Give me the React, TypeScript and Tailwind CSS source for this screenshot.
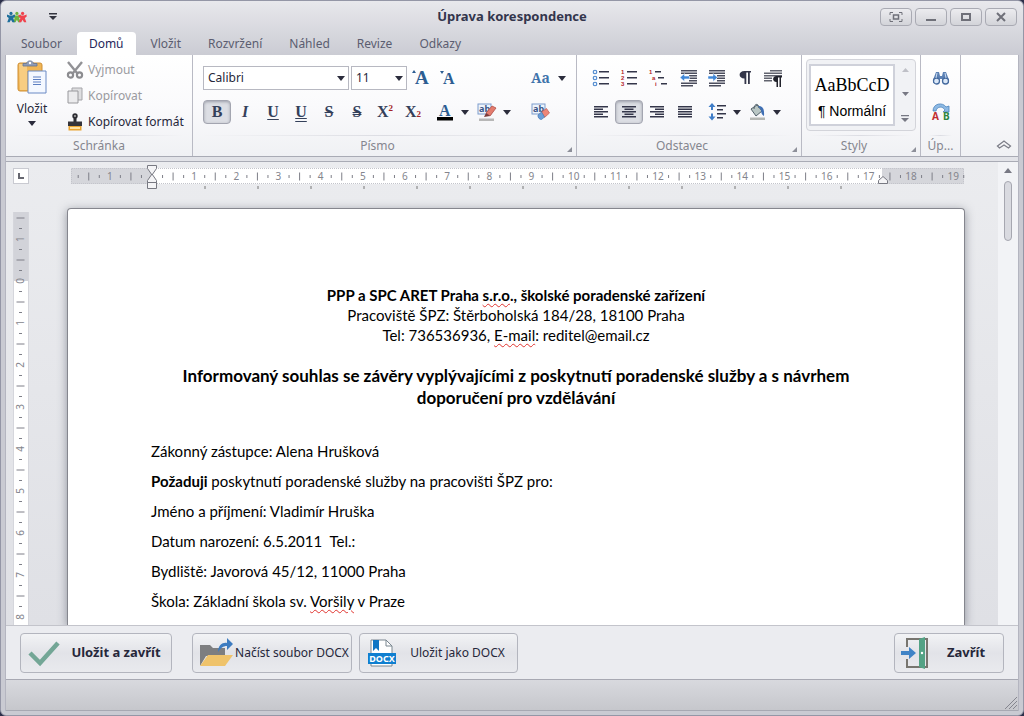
import type { ReactNode } from 'react';
import { clsx } from 'clsx';

const TABS = ['Soubor', 'Domů', 'Vložit', 'Rozvržení', 'Náhled', 'Revize', 'Odkazy'];
const CM = 42;

function Caret() {
  return (
    <svg width="8" height="5" viewBox="0 0 8 5" aria-hidden>
      <path d="M0 0h8L4 5z" fill="#2b2c3c" />
    </svg>
  );
}

function ToolButton({ label, active, children }: { label: string; active?: boolean; children: ReactNode }) {
  return (
    <button
      type="button"
      aria-label={label}
      aria-pressed={active}
      className={clsx(
        'flex h-6 w-7 shrink-0 items-center justify-center leading-5',
        active &&
          'rounded-sm border border-[#a3a5b0] bg-[#dcdee4] shadow-[inset_0_1px_3px_rgba(80,85,100,0.45)]',
      )}
    >
      {children}
    </button>
  );
}

function CaretButton({ label }: { label: string }) {
  return (
    <button type="button" aria-label={label} className="flex h-6 w-3 shrink-0 items-center justify-center">
      <Caret />
    </button>
  );
}

function Group({ title, className, launcher, children }: {
  title: string;
  className: string;
  launcher?: boolean;
  children: ReactNode;
}) {
  return (
    <section className={clsx('relative flex shrink-0 flex-col border-r border-[#b9bac4]', className)}>
      <div className="h-20">{children}</div>
      <div className="mx-2 h-px bg-linear-to-r from-transparent via-[#dcdde3] to-transparent" />
      <h2 className={clsx('text-center text-xs leading-5 text-[#85868f]', launcher && 'pr-3.5')}>{title}</h2>
      {launcher && (
        <svg className="absolute right-1 bottom-1" width="5" height="5" viewBox="0 0 5 5" aria-hidden>
          <path d="M5 0v5H0z" fill="#8d8f99" />
        </svg>
      )}
    </section>
  );
}

function Combo({ label, value, className }: { label: string; value: string; className: string }) {
  return (
    <div className={clsx('relative', className)}>
      <select
        aria-label={label}
        className="block h-6 w-full appearance-none border border-[#b7b8c1] bg-white pl-1 text-xs text-[#26273a]"
      >
        <option>{value}</option>
      </select>
      <span className="pointer-events-none absolute inset-y-0 right-1 flex items-center">
        <Caret />
      </span>
    </div>
  );
}

// Horizontal bars of a paragraph icon, each given as [x, y, width].
function Lines({ rows, fill = '#34364a' }: { rows: number[][]; fill?: string }) {
  return (
    <>
      {rows.map(([x, y, w], i) => (
        <rect key={i} x={x} y={y} width={w} height="1.5" fill={fill} />
      ))}
    </>
  );
}

function Icon({ children }: { children: ReactNode }) {
  return (
    <svg className="overflow-visible" width="18" height="18" viewBox="0 0 18 18" aria-hidden>
      {children}
    </svg>
  );
}

function AlignIcon({ kind }: { kind: 'left' | 'center' | 'right' | 'justify' }) {
  const rows = [0, 1, 2, 3, 4].map((i) => {
    const w = kind === 'justify' || i % 2 === 0 ? 14 : 9;
    const x = kind === 'center' ? 9 - w / 2 : kind === 'right' ? 16 - w : 2;
    return [x, 3 + i * 2.5, w];
  });
  return (
    <Icon>
      <Lines rows={rows} />
    </Icon>
  );
}

function IndentIcon({ out }: { out?: boolean }) {
  return (
    <Icon>
      <Lines rows={[[1, 1, 16], [1, 3.5, 16], [9, 6, 8], [9, 8.5, 8], [9, 11, 8], [1, 13.5, 16], [1, 16, 12]]} fill="#4b4d5d" />
      <path
        d={out ? 'M0 8.5l4.5-4v2.6h5v2.8h-5v2.6z' : 'M9.500 8.500l-4.500-4v2.600H0v2.800h5v2.600z'}
        fill="#3f86d6"
        stroke="#fff"
        strokeWidth=".5"
      />
    </Icon>
  );
}

function ListIcon({ kind }: { kind: 'bullets' | 'numbers' | 'levels' }) {
  if (kind === 'bullets') {
    return (
      <Icon>
        {[3, 9, 15].map((y) => (
          <circle key={y} cx="3" cy={y} r="1.8" fill="#eaf3fd" stroke="#4a86cc" strokeWidth="1.1" />
        ))}
        <Lines rows={[[7, 2, 10], [7, 8, 10], [7, 14, 10]]} />
      </Icon>
    );
  }
  const steps = kind === 'numbers' ? [0, 0, 0] : [0, 3, 6];
  const marks = kind === 'numbers' ? ['1', '2', '3'] : ['1', 'a', 'i'];
  return (
    <Icon>
      {marks.map((m, i) => (
        <text
          key={m}
          x={1 + steps[i]}
          y={5 + i * 6}
          fontSize="6"
          fill="#b2262c"
          className="font-['Liberation_Sans',sans-serif] font-bold"
        >
          {m}
        </text>
      ))}
      <Lines rows={steps.map((s, i) => [7 + s, 2 + i * 6, kind === 'numbers' ? 10 : 6])} />
    </Icon>
  );
}

function AppLogo() {
  return (
    <svg width="20" height="12" viewBox="0 0 20 12" aria-hidden>
      {[
        [9.9, '#6fb43f'],
        [4, '#1f6f9c'],
        [15.6, '#f0434d'],
      ].map(([x, c]) => (
        <g key={x} transform={`translate(${x} 0)`} fill={c as string}>
          <circle cy="2.4" r="1.6" />
          <path d="M-4 3.600l2.600 1h2.800L4 3.600v2.200L2.200 7l1.600 4.200H1.400L0 8.800l-1.400 2.400h-2.400L-2.200 7-4 5.800z" />
        </g>
      ))}
    </svg>
  );
}

function ClipboardIcon() {
  return (
    <svg width="32" height="36" viewBox="0 0 32 36" aria-hidden>
      <rect x="2" y="4" width="24" height="28" rx="2" fill="#f0b555" stroke="#cf8f35" />
      <path d="M3 5h8v26H4z" fill="#f8cd82" />
      <path d="M7 7V4.500h3.500C11 1 17 1 17.500 4.500H21V7z" fill="#8f9cb8" stroke="#66738f" strokeWidth=".8" />
      <circle cx="14" cy="4" r="1.200" fill="#fff" />
      <path d="M12 12h18v22H12z" fill="#f4f8ff" stroke="#6b8ac4" />
      <path d="M17 18h8M17 20.500h8M17 23h8M17 25.500h8" stroke="#5c7fc2" />
    </svg>
  );
}

function ScissorsIcon() {
  return (
    <Icon>
      <path d="M2 1l9 11M16 1L7 12" stroke="#929296" strokeWidth="2.400" fill="none" />
      <circle cx="4.500" cy="14" r="2.600" fill="none" stroke="#8c8c90" strokeWidth="2.200" />
      <circle cx="13.500" cy="14" r="2.600" fill="none" stroke="#8c8c90" strokeWidth="2.200" />
    </Icon>
  );
}

function CopyIcon() {
  return (
    <Icon>
      <path d="M6 1h10v12H6z" fill="#dedee0" stroke="#a5a5a9" />
      <path d="M2 4h10v12H2z" fill="#ebebed" stroke="#98989c" />
    </Icon>
  );
}

function BrushIcon() {
  return (
    <Icon>
      <circle cx="9" cy="3" r="2.700" fill="#2d2d33" />
      <circle cx="9" cy="3" r=".9" fill="#bbb" />
      <path d="M7.500 5h3v4h-3z" fill="#2d2d33" />
      <path d="M2 8.500h14V13H2z" fill="#34343a" />
      <path d="M2.500 13h13v4.500h-13z" fill="#eaa431" />
      <path d="M4 14h10v2H4z" fill="#ffe3a4" />
    </Icon>
  );
}

function MarkerIcon({ eraser }: { eraser?: boolean }) {
  return (
    <svg width="20" height="20" viewBox="0 0 20 20" aria-hidden>
      <rect x="1" y="2" width="13" height="10" fill="#eef4fc" stroke="#7d9ccc" />
      <text x="2" y="10" fontSize="9" fontWeight="700" fill="#3a5688">
        ab
      </text>
      {eraser ? (
        <>
          <path d="M10.500 10l5-3.500 3 4.500-5 4.500z" fill="#ee8577" stroke="#bb5a52" strokeWidth=".7" />
          <path d="M7 13l3.500-3 3 5-3 2.500c-2 0-4-2-3.500-4.500z" fill="#6b9fd8" stroke="#4a79b4" strokeWidth=".7" />
        </>
      ) : (
        <>
          <path d="M9 11l6-7 4 2-6 8z" fill="#e47c6e" stroke="#b04f46" strokeWidth=".8" />
          <path d="M7 15l2-4 4 3z" fill="#7b3a38" />
          <rect x="2" y="16.500" width="15" height="2.500" fill="#b7b7b7" />
        </>
      )}
    </svg>
  );
}

function BucketIcon() {
  return (
    <Icon>
      <path d="M3 6l6-4 5 6-6 5z" fill="#b9c6c4" stroke="#51606a" />
      <path d="M6 6c0-6 5-6 5-1" fill="none" stroke="#51606a" />
      <path d="M10 3c5 0 6.500 3 6 10-2-1-3-3-3-6z" fill="#3f6fb4" />
      <rect x="2" y="14.500" width="15" height="2.500" fill="#b5b7b4" />
    </Icon>
  );
}

function SpacingIcon() {
  return (
    <Icon>
      <path d="M4 0l3.500 4H5v3H3V4H.5zM4 17.500l3.500-4H5v-3H3v3H.5z" fill="#3f7dc8" />
      <Lines rows={[[9, 2, 9], [9, 6, 6], [9, 10, 9], [9, 14, 6]]} />
    </Icon>
  );
}

function Binoculars() {
  return (
    <Icon>
      <path d="M4 3h3l1 4h2l1-4h3l3 8v3h-6v-4H7v4H1v-3z" fill="#5c81b4" />
      <circle cx="4.500" cy="12" r="3" fill="#dbe8f8" stroke="#456a9f" strokeWidth="1.300" />
      <circle cx="13.500" cy="12" r="3" fill="#dbe8f8" stroke="#456a9f" strokeWidth="1.300" />
      <path d="M5 4l-1 5M13 4l1 5" stroke="#c9dbf1" />
    </Icon>
  );
}

function ReplaceIcon() {
  return (
    <svg className="overflow-visible" width="20" height="20" viewBox="0 0 20 20" aria-hidden>
      <path d="M2 9c0-8 10-9 13-4l3-1v6h-6l2-2C12 4 6 4 5 9z" fill="#8db9e4" stroke="#4b84bd" strokeWidth=".8" />
      <text x="1" y="18" fontSize="10" fontWeight="700" fill="#c02d30">
        A
      </text>
      <text x="12" y="18" fontSize="10" fontWeight="700" fill="#2c8540">
        B
      </text>
    </svg>
  );
}

function WindowButton({ label, children }: { label: string; children: ReactNode }) {
  return (
    <button
      type="button"
      aria-label={label}
      className="flex h-[18px] w-8 items-center justify-center rounded-sm border border-[#a9aab3] bg-linear-to-b from-[#ececef] to-[#d3d4d9]"
    >
      <svg width="14" height="12" viewBox="0 0 14 12" fill="none" stroke="#6f7079" strokeWidth="2" aria-hidden>
        {children}
      </svg>
    </button>
  );
}

function TitleBar() {
  return (
    <header className="flex h-[31px] items-center justify-between px-1.5">
      <div className="flex w-36 items-center gap-5">
        <AppLogo />
        <button type="button" aria-label="Panel rychlého přístupu" className="px-0.5">
          <svg width="8" height="7" viewBox="0 0 8 7" aria-hidden>
            <path d="M0 0h8v1.500H0zM0 3h8L4 7z" fill="#33343f" />
          </svg>
        </button>
      </div>
      <h1 className="text-[13px] font-bold text-[#33354c]">Úprava korespondence</h1>
      <div className="flex w-36 justify-end gap-[3px]">
        <WindowButton label="Celá obrazovka">
          <path d="M1 4V1.500h3M10 1.500h3V4M13 8v2.500h-3M4 10.500H1V8" strokeWidth="1" />
          <rect x="4.500" y="4" width="5" height="4" strokeWidth="1.500" />
        </WindowButton>
        <WindowButton label="Minimalizovat">
          <path d="M2 9h10" />
        </WindowButton>
        <WindowButton label="Maximalizovat">
          <rect x="3" y="3" width="8" height="6" />
        </WindowButton>
        <WindowButton label="Zavřít okno">
          <path d="M3 2l8 8M11 2l-8 8" />
        </WindowButton>
      </div>
    </header>
  );
}

function Ribbon() {
  return (
    <div className="flex h-[102px] shrink-0 border-b border-[#a9abb5] bg-linear-to-b from-white via-[#fafafc] to-[#f0f1f4]">
      <Group title="Schránka" className="w-[187px]">
        <div className="flex pt-0.5 pl-1.5">
          <button type="button" className="flex w-10 flex-col items-center pt-0.5 text-xs text-[#26273a]">
            <ClipboardIcon />
            <span className="mt-1.5 mb-1">Vložit</span>
            <Caret />
          </button>
          <div className="ml-3.5 flex flex-col text-xs">
            <button type="button" disabled className="flex h-[26px] items-center gap-1 text-[#9a9aa0]">
              <ScissorsIcon />
              Vyjmout
            </button>
            <button type="button" disabled className="flex h-[26px] items-center gap-1 text-[#9a9aa0]">
              <CopyIcon />
              Kopírovat
            </button>
            <button type="button" className="flex h-[26px] items-center gap-1 text-[#26273a]">
              <BrushIcon />
              Kopírovat formát
            </button>
          </div>
        </div>
      </Group>

      <Group title="Písmo" className="w-96" launcher>
        <div className="flex flex-col gap-2.5 pt-[11px] pl-2.5">
          <div className="flex items-center">
            <Combo label="Písmo" value="Calibri" className="w-[146px]" />
            <Combo label="Velikost písma" value="11" className="ml-0.5 w-14" />
            <ToolButton label="Zvětšit písmo">
              <svg className="overflow-visible" width="18" height="18" viewBox="0 0 18 18" fill="#2c5d92" aria-hidden>
                <path d="M0 4l2-3 2 3z" />
                <text x="3" y="15" fontSize="19" className="font-['Liberation_Serif',serif] font-bold">
                  A
                </text>
              </svg>
            </ToolButton>
            <ToolButton label="Zmenšit písmo">
              <svg className="overflow-visible" width="18" height="18" viewBox="0 0 18 18" fill="#2c5d92" aria-hidden>
                <path d="M0 2h4L2 5z" />
                <text x="3" y="15" fontSize="16" className="font-['Liberation_Serif',serif] font-bold">
                  A
                </text>
              </svg>
            </ToolButton>
            <button
              type="button"
              aria-label="Velikost písmen"
              className="ml-[68px] flex h-6 items-center gap-2 font-['Noto_Serif','DejaVu_Serif',serif] text-sm font-bold text-[#3f73ab]"
            >
              Aa
              <Caret />
            </button>
          </div>
          <div className="flex items-center font-['Liberation_Serif',serif] text-base font-bold text-[#34405a]">
            <ToolButton label="Tučné" active>B</ToolButton>
            <ToolButton label="Kurzíva"><i>I</i></ToolButton>
            <ToolButton label="Podtržené"><u className="underline-offset-2">U</u></ToolButton>
            <ToolButton label="Dvojitě podtržené">
              <span className="underline decoration-double">U</span>
            </ToolButton>
            <ToolButton label="Přeškrtnuté"><s>S</s></ToolButton>
            <ToolButton label="Dvojitě přeškrtnuté">
              <span className="line-through decoration-double">S</span>
            </ToolButton>
            <ToolButton label="Horní index">
              X<sup className="text-[9px] text-[#a32226]">2</sup>
            </ToolButton>
            <ToolButton label="Dolní index">
              X<sub className="text-[9px] text-[#a32226]">2</sub>
            </ToolButton>
            <span className="w-1" />
            <ToolButton label="Barva písma">
              <svg className="overflow-visible" width="18" height="18" viewBox="0 0 18 18" aria-hidden>
                <text x="3" y="13" fontSize="16" fill="#2c5d92">
                  A
                </text>
                <rect x="1" y="14" width="16" height="3.500" fill="#000" />
              </svg>
            </ToolButton>
            <CaretButton label="Vybrat barvu písma" />
            <span className="flex pl-0.5 font-['Noto_Sans',sans-serif]">
              <ToolButton label="Barva zvýraznění"><MarkerIcon /></ToolButton>
              <CaretButton label="Vybrat barvu zvýraznění" />
              <span className="w-3.5" />
              <ToolButton label="Vymazat formátování"><MarkerIcon eraser /></ToolButton>
            </span>
          </div>
        </div>
      </Group>

      <Group title="Odstavec" className="w-[225px]" launcher>
        <div className="flex flex-col gap-2.5 pt-[11px] pl-2.5">
          <div className="flex">
            <ToolButton label="Odrážky"><ListIcon kind="bullets" /></ToolButton>
            <ToolButton label="Číslování"><ListIcon kind="numbers" /></ToolButton>
            <ToolButton label="Víceúrovňový seznam"><ListIcon kind="levels" /></ToolButton>
            <span className="w-1" />
            <ToolButton label="Zmenšit odsazení"><IndentIcon out /></ToolButton>
            <ToolButton label="Zvětšit odsazení"><IndentIcon /></ToolButton>
            <ToolButton label="Zobrazit značky">
              <Icon>
                <path d="M15 2v1.500h-1.200V15H12V3.500h-1.700V15H8.500V9.500C2 9.500 2 2 8.500 2z" fill="#34364a" />
              </Icon>
            </ToolButton>
            <ToolButton label="Nastavení odstavce">
              <svg width="20" height="18" viewBox="0 0 20 18" aria-hidden>
                <Lines rows={[[7, 1, 12], [1, 3.5, 18], [1, 6, 18], [1, 8.5, 8], [1, 11, 8]]} fill="#62646f" />
                <path d="M19 7v1.500h-1V18h-1.500V8.500H15V18h-1.500v-5C9 13 9 7 13.500 7z" fill="#22232c" />
              </svg>
            </ToolButton>
          </div>
          <div className="flex">
            <ToolButton label="Zarovnat vlevo"><AlignIcon kind="left" /></ToolButton>
            <ToolButton label="Na střed" active><AlignIcon kind="center" /></ToolButton>
            <ToolButton label="Zarovnat vpravo"><AlignIcon kind="right" /></ToolButton>
            <ToolButton label="Do bloku"><AlignIcon kind="justify" /></ToolButton>
            <span className="w-1" />
            <ToolButton label="Řádkování"><SpacingIcon /></ToolButton>
            <CaretButton label="Vybrat řádkování" />
            <ToolButton label="Stínování"><BucketIcon /></ToolButton>
            <CaretButton label="Vybrat stínování" />
          </div>
        </div>
      </Group>

      <Group title="Styly" className="w-[119px]" launcher>
        <div className="pt-1">
          <div className="mx-1 flex h-[72px] rounded border border-[#d3d4da] bg-[#f1f2f5]">
            <button
              type="button"
              className="my-1 ml-0.5 flex w-[86px] shrink-0 flex-col items-center justify-center gap-1 border-2 border-[#cfd1da] bg-white pt-1 text-black"
            >
              <span className="font-['Liberation_Serif',serif] text-lg leading-6 whitespace-nowrap">AaBbCcD</span>
              <span className="font-['Liberation_Sans',sans-serif] text-sm leading-5 whitespace-nowrap">
                ¶ Normální
              </span>
            </button>
            <div className="flex flex-1 flex-col items-center justify-between py-2">
              <svg width="7" height="4" viewBox="0 0 7 4" aria-hidden>
                <path d="M0 4h7L3.500 0z" fill="#bfc0c7" />
              </svg>
              <svg width="7" height="4" viewBox="0 0 7 4" aria-hidden>
                <path d="M0 0h7L3.500 4z" fill="#777883" />
              </svg>
              <svg width="8" height="7" viewBox="0 0 8 7" aria-hidden>
                <path d="M0 0h8v1.200H0zM0 3h8L4 7z" fill="#777883" />
              </svg>
            </div>
          </div>
        </div>
      </Group>

      <Group title="Úp..." className="w-10">
        <div className="flex flex-col items-center gap-2.5 pt-[11px]">
          <ToolButton label="Najít"><Binoculars /></ToolButton>
          <ToolButton label="Nahradit"><ReplaceIcon /></ToolButton>
        </div>
      </Group>

      <div className="flex flex-1 items-end justify-end p-1.5">
        <button type="button" aria-label="Sbalit pás karet">
          <svg width="16" height="10" viewBox="0 0 16 10" fill="#f4f4f6" stroke="#7d7e88" aria-hidden>
            <path d="M1.500 6L8 1l6.500 5-2 2L8 5 3.500 8z" strokeWidth="1.300" />
          </svg>
        </button>
      </div>
    </div>
  );
}

// Ticks and numbers of a ruler, from `from` quarter centimetres to `to`, with the origin at 0.
function RulerScale({ from, to, zero }: { from: number; to: number; zero?: boolean }) {
  const marks = [];
  for (let q = from; q <= to; q++) {
    const x = (q * CM) / 4;
    if (q % 4 === 0) {
      if (q === 0 && !zero) continue;
      marks.push(
        <text key={q} x={x} y="12" fontSize="10" textAnchor="middle" fill="#84858d">
          {Math.abs(q / 4)}
        </text>,
      );
    } else {
      const tall = q % 2 === 0;
      marks.push(<path key={q} d={tall ? `M${x} 4.5v8` : `M${x} 7v3`} stroke="#7e7f88" />);
    }
  }
  return <>{marks}</>;
}

function HorizontalRuler() {
  return (
    <svg className="ml-1 overflow-visible" width="893" height="24" viewBox="-81 0 893 24" aria-hidden>
      <rect x="-81" width="893" height="16" fill="#d5d6db" />
      <rect width="730" height="16" fill="#fff" />
      <path d="M-80.500 16V.5h892V15.500h-892" fill="none" stroke="#c3c4cb" strokeDasharray="1 1" />
      <g transform="scale(1.004 1)">
        <RulerScale from={-7} to={77} />
      </g>
      {Array.from({ length: 13 }, (_, i) => (
        <path key={i} d={`M${(i + 1) * 53} 18v3`} stroke="#777" />
      ))}
      <g fill="#f4f4f6" stroke="#777881">
        <path d="M-4.500-2.500h9v3L0 7l-4.500-6.500z" />
        <path d="M-4.500 14.500h9v6h-9zM-4.500 14.500v-2L0 6l4.500 6.500v2z" />
        <path d="M726.500 15.500v-3l4.500-4 4.500 4v3z" />
      </g>
    </svg>
  );
}

function VerticalRuler() {
  return (
    <svg className="h-full w-4" viewBox="0 0 16 1200" preserveAspectRatio="xMidYMin slice" aria-hidden>
      <rect width="16" height="1200" fill="#fff" />
      <rect width="16" height="69" fill="#d2d3d9" />
      <path d="M.5 0v1200M15.500 0v1200" stroke="#d5d6dc" />
      <g transform="translate(-1 69) rotate(-90)">
        <RulerScale from={-34} to={6} zero />
      </g>
    </svg>
  );
}

function Misspelled({ children }: { children: ReactNode }) {
  return (
    <span className="underline decoration-[#e0342f] decoration-wavy decoration-1 underline-offset-2">{children}</span>
  );
}

function Letter() {
  return (
    <article
      lang="cs"
      className="min-h-0 w-full flex-1 overflow-hidden rounded-t-sm border border-b-0 border-[#85868e] bg-white px-[83px] pt-[76px] font-['Lato',sans-serif] text-[15px] text-black shadow-[0_2px_10px_rgba(60,65,80,0.5)]"
    >
      <div className="text-center leading-5">
        <p className="font-bold">
          PPP a SPC ARET Praha <Misspelled>s.r.o</Misspelled>., školské poradenské zařízení
        </p>
        <p>Pracoviště ŠPZ: Štěrboholská 184/28, 18100 Praha</p>
        <p>
          Tel: 736536936, <Misspelled>E-mail</Misspelled>: reditel@email.cz
        </p>
      </div>
      <h2 className="mt-5 text-center text-[17px] leading-[22px] font-bold">
        Informovaný souhlas se závěry vyplývajícími z poskytnutí poradenské služby a s návrhem doporučení pro
        vzdělávání
      </h2>
      <div className="mt-[27px] leading-[30px] whitespace-pre-wrap">
        <p>Zákonný zástupce: Alena Hrušková</p>
        <p>
          <b>Požaduji</b> poskytnutí poradenské služby na pracovišti ŠPZ pro:
        </p>
        <p>Jméno a příjmení: Vladimír Hruška</p>
        <p>Datum narození: 6.5.2011  Tel.:</p>
        <p>Bydliště: Javorová 45/12, 11000 Praha</p>
        <p>
          Škola: Základní škola sv. <Misspelled>Voršily</Misspelled> v Praze
        </p>
      </div>
    </article>
  );
}

function Editor() {
  return (
    <main className="mt-1 flex min-h-0 flex-1 overflow-hidden border-t border-[#a9abb5] bg-linear-to-b from-[#ebecef] to-[#dfe0e5]">
      <div className="flex w-7 shrink-0 flex-col pt-1.5 pl-[7px]">
        <div className="mb-7 flex h-4 w-4 shrink-0 items-center justify-center border border-[#c9cad1] bg-white">
          <svg width="6" height="6" viewBox="0 0 6 6" aria-hidden>
            <path d="M1 0v5h5" fill="none" stroke="#666770" strokeWidth="2" />
          </svg>
        </div>
        <div className="min-h-0 flex-1">
          <VerticalRuler />
        </div>
      </div>
      <div className="flex min-w-0 flex-1 justify-center overflow-hidden pt-1.5">
        <div className="flex w-[898px] shrink-0 flex-col">
          <div className="h-10 shrink-0">
            <HorizontalRuler />
          </div>
          <Letter />
        </div>
      </div>
      <div className="flex w-5 shrink-0 flex-col items-center gap-2 bg-[#f2f3f6] pt-1.5">
        <svg width="8" height="5" viewBox="0 0 8 5" aria-hidden>
          <path d="M0 5h8L4 0z" fill="#777883" />
        </svg>
        <div className="h-[60px] w-2 rounded border border-[#a6a7b0] bg-[#d9dae0]" />
      </div>
    </main>
  );
}

function ActionButton({ icon, className, children }: { icon: ReactNode; className: string; children: ReactNode }) {
  return (
    <button
      type="button"
      className={clsx(
        'flex h-10 items-center rounded border border-[#b3b5be] bg-linear-to-b from-[#f2f3f5] via-[#e2e3e8] to-[#e9eaee] pl-1.5 whitespace-nowrap text-[#26273a]',
        className,
      )}
    >
      {icon}
      <span className="flex-1 text-center">{children}</span>
    </button>
  );
}

function ActionBar() {
  return (
    <footer className="flex h-[54px] shrink-0 items-center border-t border-[#c3c4cb] bg-[#ebecf0] px-3.5">
      <ActionButton
        className="w-[152px] text-[13px] font-bold"
        icon={
          <svg width="34" height="28" viewBox="0 0 34 28" aria-hidden>
            <path d="M3 14l10 10L31 4" fill="none" stroke="#73a696" strokeWidth="4.500" />
          </svg>
        }
      >
        Uložit a zavřít
      </ActionButton>
      <ActionButton
        className="ml-5 w-40 text-xs"
        icon={
          <svg width="34" height="30" viewBox="0 0 34 30" aria-hidden>
            <path d="M1 7h10l3 3h12v8H7L1 28z" fill="#7d7e80" />
            <path d="M9 17h25l-8 11H1z" fill="#efc36b" />
            <path d="M19 14c0-7 5-10 9-9V0l6 6-6 6V8c-4 0-6 2-9 6z" fill="#3d7cc0" />
          </svg>
        }
      >
        Načíst soubor DOCX
      </ActionButton>
      <ActionButton
        className="ml-[7px] w-[159px] text-xs"
        icon={
          <svg width="32" height="32" viewBox="0 0 32 32" aria-hidden>
            <path d="M5 3h15l6 6v20H5z" fill="#fff" stroke="#7a8790" />
            <path d="M20 3v6h6" fill="none" stroke="#7a8790" />
            <path d="M7 3h6v11l-3-3-3 3z" fill="#0f75c4" />
            <rect x="2" y="16" width="28" height="11" fill="#0f7fd0" />
            <text x="16" y="25" fontSize="9" fontWeight="700" textAnchor="middle" fill="#fff">
              DOCX
            </text>
          </svg>
        }
      >
        Uložit jako DOCX
      </ActionButton>
      <ActionButton
        className="ml-auto w-[110px] text-[13px] font-bold"
        icon={
          <svg width="28" height="34" viewBox="0 0 28 34" aria-hidden>
            <path d="M6 11V3h20v28H6v-8" fill="none" stroke="#77756f" strokeWidth="2" />
            <path d="M18 3l6-2v32l-6-2z" fill="#53a285" />
            <circle cx="21" cy="17" r="1.200" fill="#fff" />
            <path d="M0 15h8v-4l7 6-7 6v-4H0z" fill="#3f83c6" />
          </svg>
        }
      >
        Zavřít
      </ActionButton>
    </footer>
  );
}

export default function App() {
  return (
    <div className="h-screen bg-[#2c2f4a] font-['Noto_Sans',sans-serif]">
      <div className="flex h-full flex-col overflow-hidden rounded-md border border-[#9496a6] bg-linear-to-b from-[#e8e8ec] to-[#c9cad2] to-8%">
        <TitleBar />
        <nav className="flex h-[23px] shrink-0 gap-[3px] pl-2">
          {TABS.map((tab) => (
            <button
              key={tab}
              type="button"
              className={clsx(
                'px-3 text-xs',
                tab === 'Domů' ? 'rounded-t-sm bg-white text-[#26275a]' : 'text-[#5b5d70]',
              )}
            >
              {tab}
            </button>
          ))}
        </nav>
        <div className="mx-1 flex min-h-0 flex-1 flex-col border-x border-[#b4b5c0] bg-[#e2e3e8]">
          <Ribbon />
          <Editor />
          <ActionBar />
          <div className="flex h-8 shrink-0 items-end justify-end border-y border-[#a7a8b2] bg-linear-to-b from-[#d8d9de] to-[#c6c7cc] p-px">
            <svg width="12" height="12" viewBox="0 0 12 12" stroke="#85868f" aria-hidden>
              <path d="M0 12L12 0M4 12l8-8M8 12l4-4" />
            </svg>
          </div>
        </div>
        <div className="h-1 shrink-0" />
      </div>
    </div>
  );
}
